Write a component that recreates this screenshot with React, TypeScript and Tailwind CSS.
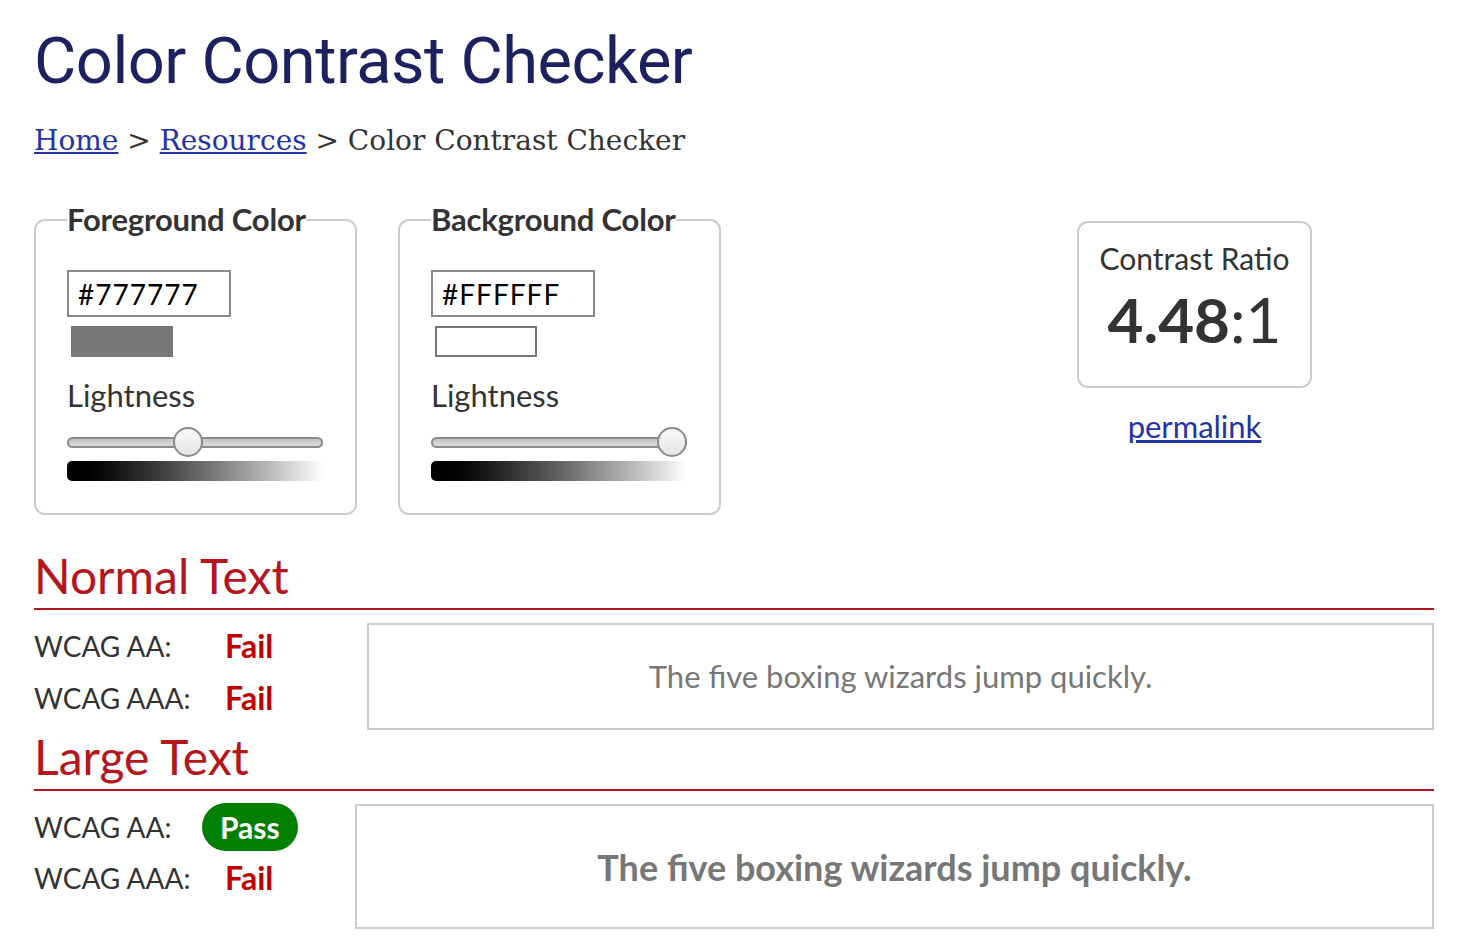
import React from "react";

const sans = "font-['Lato','Noto_Sans',sans-serif]";

function Slider({ pos }: { pos: number }) {
  return (
    <div className="mt-[22px] w-[256px]">
      <div className="relative h-[11px]">
        <div className="absolute left-0 right-0 top-0 h-[11px] rounded-full border-2 border-[#8a8a8a] bg-gradient-to-b from-[#c4c4c4] to-[#dcdcdc]" />
        <div
          className="absolute top-[-10px] h-[30px] w-[30px] -translate-x-1/2 rounded-full border-2 border-[#8a8a8a] bg-gradient-to-b from-[#fafafa] to-[#e4e4e4]"
          style={{ left: `${pos}px` }}
        />
      </div>
      <div className="mt-[13px] h-[20px] w-[256px] rounded-l-[5px] bg-gradient-to-r from-black to-white" />
    </div>
  );
}

function ColorBox({
  title,
  value,
  swatch,
  pos,
}: {
  title: string;
  value: string;
  swatch: React.ReactNode;
  pos: number;
}) {
  return (
    <fieldset className="w-[323px] rounded-[11px] border-2 border-[#cccccc] px-[31px] pb-[32px] pt-[2px]">
      <legend className="px-0 text-[31px] font-bold leading-none tracking-[-0.2px] text-[#333]">
        {title}
      </legend>
      <div className="mt-[33px] flex h-[47px] w-[164px] items-center border-2 border-[#8a8a8a] pl-[9px] text-[28px] tracking-[1px] text-black">
        {value}
      </div>
      {swatch}
      <div className="mt-[18px] text-[31px] leading-[40px] text-[#333]">Lightness</div>
      <Slider pos={pos} />
    </fieldset>
  );
}

export default function App() {
  return (
    <div className={`min-h-[938px] w-[1458px] bg-white pl-[34px] pr-[24px] ${sans}`}>
      <h1 className="pt-[22px] font-['Roboto',sans-serif] text-[65px] font-normal leading-[78px] tracking-[-0.5px] text-[#1c2260]">
        Color Contrast Checker
      </h1>
      <div className="mt-[24px] font-['DejaVu_Serif','Noto_Serif',serif] text-[28px] leading-[34px] text-[#333]">
        <a href="#" className="text-[#2433a5] underline">Home</a>
        <span> &gt; </span>
        <a href="#" className="text-[#2433a5] underline">Resources</a>
        <span> &gt; Color Contrast Checker</span>
      </div>

      <div className="mt-[46px] flex items-start">
        <ColorBox
          title="Foreground Color"
          value="#777777"
          pos={121}
          swatch={<div className="ml-[4px] mt-[9px] h-[31px] w-[102px] bg-[#777777]" />}
        />
        <div className="w-[41px]" />
        <ColorBox
          title="Background Color"
          value="#FFFFFF"
          pos={241}
          swatch={
            <div className="ml-[4px] mt-[9px] h-[31px] w-[102px] border-2 border-[#777777] bg-white" />
          }
        />
        <div className="flex flex-1 flex-col items-center pl-[234px] pt-[17px]">
          <div className="flex h-[167px] w-[235px] flex-col items-center rounded-[11px] border-2 border-[#cccccc] pt-[15px] text-[#333]">
            <div className="text-[30px] leading-[40px]">Contrast Ratio</div>
            <div className="mt-[9px] text-[62px] leading-[64px]">
              <span className="font-bold">4.48</span>:1
            </div>
          </div>
          <a href="#" className="mt-[18px] text-[31px] leading-[40px] text-[#2433a5] underline">
            permalink
          </a>
        </div>
      </div>

      <div className="mt-[33px] w-[1400px]">
        <h2 className="border-b-2 border-[#b5151d] pb-[4px] text-[48px] leading-[56px] text-[#b5151d]">
          Normal Text
        </h2>
        <div className="mt-[13px] flex">
          <div className="w-[333px] text-[28px] text-[#333]">
            <div className="flex h-[46px] items-center">
              <span className="w-[191px]">WCAG AA:</span>
              <span className="text-[32px] font-bold text-[#c00000]">Fail</span>
            </div>
            <div className="flex h-[58px] items-center">
              <span className="w-[191px]">WCAG AAA:</span>
              <span className="text-[32px] font-bold text-[#c00000]">Fail</span>
            </div>
          </div>
          <div className="flex h-[107px] flex-1 items-center justify-center border-2 border-[#cccccc] text-[31px] text-[#777777]">
            The five boxing wizards jump quickly.
          </div>
        </div>

        <h2 className="mt-[-1px] border-b-2 border-[#b5151d] pb-[4px] text-[48px] leading-[56px] text-[#b5151d]">
          Large Text
        </h2>
        <div className="mt-[12px] flex">
          <div className="w-[321px] text-[28px] text-[#333]">
            <div className="flex h-[48px] items-center">
              <span className="w-[168px]">WCAG AA:</span>
              <span className="flex h-[48px] items-center rounded-full bg-[#007f00] px-[18px] text-[30px] font-bold text-white">
                Pass
              </span>
            </div>
            <div className="flex h-[54px] items-center">
              <span className="w-[191px]">WCAG AAA:</span>
              <span className="text-[32px] font-bold text-[#c00000]">Fail</span>
            </div>
          </div>
          <div className="mt-[1px] flex h-[125px] flex-1 items-center justify-center border-2 border-[#cccccc] text-[36px] font-bold text-[#777777]">
            The five boxing wizards jump quickly.
          </div>
        </div>
      </div>
    </div>
  );
}
